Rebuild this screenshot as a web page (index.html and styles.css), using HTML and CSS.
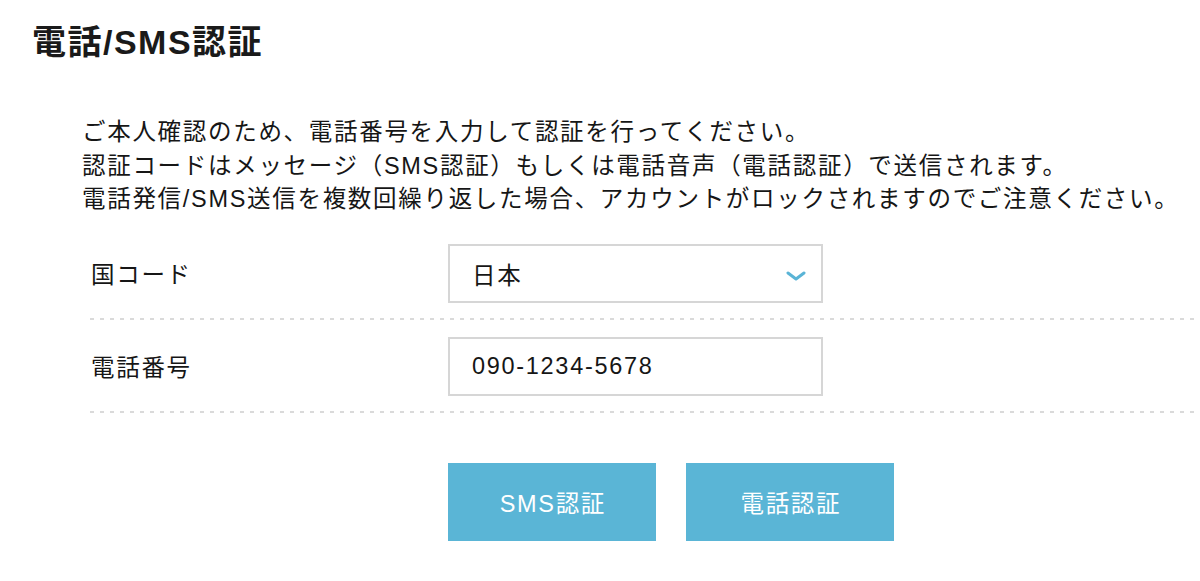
FILE: index.html
```html
<!DOCTYPE html>
<html lang="ja">
<head>
<meta charset="utf-8">
<title>電話/SMS認証</title>
<link rel="stylesheet" href="styles.css">
</head>
<body>
<main class="page">
  <h1 class="title">電話/SMS認証</h1>
  <section class="verify">
    <p class="intro">ご本人確認のため、電話番号を入力して認証を行ってください。<br>認証コードはメッセージ（SMS認証）もしくは電話音声（電話認証）で送信されます。<br>電話発信/SMS送信を複数回繰り返した場合、アカウントがロックされますのでご注意ください。</p>
    <div class="form">
      <div class="row">
        <label class="label">国コード</label>
        <div class="field select">
          <span class="value">日本</span>
          <svg class="chevron" width="20" height="10" viewBox="0 0 20 10" aria-hidden="true"><polyline points="2,2 10,8 18,2" fill="none" stroke="#5ab4d6" stroke-width="3" stroke-linecap="round" stroke-linejoin="round"/></svg>
        </div>
      </div>
      <div class="row">
        <label class="label">電話番号</label>
        <div class="field input"><span class="value">090-1234-5678</span></div>
      </div>
    </div>
    <div class="actions">
      <button class="btn" type="button">SMS認証</button>
      <button class="btn" type="button">電話認証</button>
    </div>
  </section>
</main>
</body>
</html>
```
FILE: styles.css
```css
* { box-sizing: border-box; }
html, body { margin: 0; padding: 0; background: #fff; }
body {
  font-family: "Liberation Sans", "Noto Sans CJK JP", sans-serif;
  color: #161616;
  overflow: hidden;
}
.page {
  padding-top: 22px;
}
.title {
  margin: 0;
  padding-left: 32px;
  font-size: 34px;
  line-height: 41px;
  font-weight: 700;
  letter-spacing: 1.5px;
  color: #1a1a1a;
}
.verify {
  padding-left: 82px;
}
.intro {
  margin: 53px 0 0;
  font-size: 23.5px;
  line-height: 33.5px;
  letter-spacing: 1.7px;
  white-space: nowrap;
}
.form {
  margin-top: 10.5px;
  margin-left: 8px;
}
.row {
  display: grid;
  grid-template-columns: 358px 375px;
  align-items: center;
  padding: 17px 0;
  background-image: repeating-linear-gradient(to right, #dadada 0 4px, transparent 4px 10px);
  background-size: 100% 2px;
  background-repeat: no-repeat;
  background-position: left bottom;
}
.label {
  padding-left: 1px;
  padding-top: 3px;
  font-size: 23.5px;
  letter-spacing: 1.7px;
  line-height: 30px;
}
.field {
  height: 59px;
  border: 2px solid #d6d6d6;
  background: #fff;
  display: flex;
  align-items: center;
  padding: 0 15px 0 22px;
  font-size: 23.5px;
  letter-spacing: 1.7px;
}
.select {
  justify-content: space-between;
}
.chevron {
  display: block;
  margin-top: 4px;
}
.actions {
  display: flex;
  gap: 30px;
  margin-top: 50px;
  padding-left: 366px;
}
.btn {
  width: 208px;
  height: 78px;
  border: none;
  background: #5ab5d6;
  color: #fff;
  font-family: inherit;
  font-size: 23.5px;
  letter-spacing: 1.7px;
  padding: 0 0 0 1.7px;
  cursor: pointer;
}
```
